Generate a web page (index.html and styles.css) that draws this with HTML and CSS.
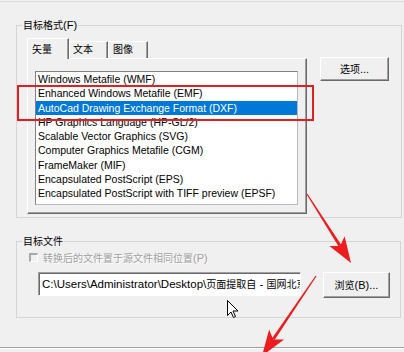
FILE: index.html
```html
<!DOCTYPE html>
<html lang="zh-CN">
<head>
<meta charset="UTF-8" />
<meta name="viewport" content="width=device-width, initial-scale=1" />
<title>导出</title>
<link rel="stylesheet" href="styles.css">
</head>
<body>

<div class="topline"></div>

<div class="group group-format">
  <div class="group-title"><span class="zh">目标格式</span>(F)</div>
  <div class="format-row">
    <div class="tabctl">
      <div class="tabs">
        <div class="tab active tab-1"><span class="zh">矢量</span></div>
        <div class="tab tab-2"><span class="zh">文本</span></div>
        <div class="tab tab-3"><span class="zh">图像</span></div>
      </div>
      <div class="tabpanel">
        <ul class="listbox">
          <li>Windows Metafile (WMF)</li>
          <li>Enhanced Windows Metafile (EMF)</li>
          <li class="selected">AutoCad Drawing Exchange Format (DXF)</li>
          <li>HP Graphics Language (HP-GL/2)</li>
          <li>Scalable Vector Graphics (SVG)</li>
          <li>Computer Graphics Metafile (CGM)</li>
          <li>FrameMaker (MIF)</li>
          <li>Encapsulated PostScript (EPS)</li>
          <li>Encapsulated PostScript with TIFF preview (EPSF)</li>
        </ul>
      </div>
    </div>
    <button class="btn btn-options"><span class="btn-label"><span class="zh">选项</span>...</span></button>
  </div>
</div>

<div class="group group-file">
  <div class="group-title"><span class="zh">目标文件</span></div>
  <div class="check disabled"><span class="box"></span><span class="check-label"><span class="zh">转换后的文件置于源文件相同位置</span>(P)</span></div>
  <div class="file-row">
    <div class="textbox">C:\Users\Administrator\Desktop\<span class="zh">页面提取自</span> - <span class="zh">国网北京</span></div>
    <button class="btn btn-browse"><span class="btn-label"><span class="zh">浏览</span>(B)...</span></button>
  </div>
</div>

<div class="bottomline"></div>

<!-- annotations drawn over the dialog -->
<div class="highlight"></div>
<svg class="annot" width="404" height="352" viewBox="0 0 404 352">
  <g fill="#ec1c1f">
    <polygon points="307.5,193.7 341.5,245.3 338.9,246.9 306.5,194.3" />
    <polygon points="351,263 344.6,236.3 340.2,246.1 329.4,245.9" />
    <polygon points="316.5,276.3 274.4,340.2 271.9,338.6 315.5,275.7" />
    <polygon points="262,356 284.1,339.4 273.2,339.4 269.1,329.4" />
  </g>
  <path class="cursor" d="M227.5 300.5 V315.5 L231 312 L233.5 317.5 L235.5 316.5 L233 311 L238 311 Z" />
</svg>

</body>
</html>
```

FILE: styles.css
```css
* {
  box-sizing: border-box;
}
html, body {
  margin: 0;
}
body {
  position: relative;
  width: 404px;
  height: 352px;
  overflow: hidden;
  background: #f0f0f0;
  font-family: "Liberation Sans", "Noto Sans CJK SC", sans-serif;
  font-size: 11px;
  color: #000;
}
.zh {
  font-size: 10px;
}
.topline {
  height: 1px;
  margin-top: 1px;
  background: #dcdcdc;
}

/* group boxes */
.group {
  margin-left: 16px;
  border: 1px solid #d5d5d5;
}
.group-format {
  margin-top: 23px;
  width: 386px;
  height: 193px;
}
.group-file {
  margin-top: 23px;
  width: 385px;
  height: 77px;
}
.group-title {
  width: fit-content;
  height: 14px;
  margin: -8px 0 0 5px;
  padding: 0 1px;
  line-height: 14px;
  background: #f0f0f0;
}

/* tab control */
.format-row {
  display: flex;
  align-items: flex-start;
  margin: 6px 0 0 10px;
}
.tabctl {
  width: 280px;
}
.tabs {
  position: relative;
  z-index: 1;
  display: flex;
  align-items: flex-start;
  height: 20px;
}
.tab {
  height: 17px;
  margin-top: 3px;
  line-height: 14px;
  border: 1px solid;
  border-color: #fff #696969 transparent #fff;
  border-bottom: 0;
  box-shadow: inset -1px 0 #a0a0a0;
  white-space: nowrap;
}
.tab.active {
  height: 21px;
  margin-top: 0;
  padding-top: 3px;
  background: #f0f0f0;
}
.tab-1 {
  width: 42px;
  padding-left: 4px;
}
.tab-2 {
  width: 39px;
  padding-left: 3px;
}
.tab-3 {
  width: 40px;
  padding-left: 4px;
}
.tabpanel {
  height: 156px;
  padding: 12px 7px 0 7px;
  border: 1px solid;
  border-color: #fff #696969 #696969 #fff;
  box-shadow: inset -1px -1px #a0a0a0;
}
.listbox {
  list-style: none;
  margin: 0;
  padding: 0;
  width: 263px;
  height: 134px;
  overflow: hidden;
  background: #fff;
  border: 1px solid;
  border-color: #828282 #b9b9b9 #b9b9b9 #828282;
  font-size: 10.5px;
}
.listbox li {
  height: 14.25px;
  line-height: 14.25px;
  padding-left: 2px;
  white-space: nowrap;
}
.listbox li.selected {
  background: #0078d7;
  color: #fff;
}

/* buttons */
.btn {
  padding: 0;
  font-family: inherit;
  font-size: 11px;
  color: #000;
  text-align: center;
  white-space: nowrap;
  background: #f0f0f0;
  border: 1px solid;
  border-color: #fff #696969 #696969 #fff;
  box-shadow: inset -1px -1px #a0a0a0;
}
.btn-label {
  display: inline-block;
  line-height: 14px;
}
.btn-options {
  width: 69px;
  height: 24px;
  margin: 19px 0 0 13px;
}
.btn-browse {
  width: 67px;
  height: 26px;
  margin-left: 22px;
}

/* target file */
.check {
  display: flex;
  align-items: center;
  height: 18px;
  margin-left: 12px;
  white-space: nowrap;
}
.check.disabled {
  color: #a0a0a0;
  text-shadow: 1px 1px #fff;
}
.box {
  width: 9px;
  height: 9px;
  margin-right: 5px;
  border-top: 2px solid #a8a8a8;
  border-left: 2px solid #a8a8a8;
  border-right: 1px solid #fff;
  border-bottom: 1px solid #fff;
}
.file-row {
  display: flex;
  align-items: flex-start;
  margin: 6px 0 0 21px;
}
.textbox {
  width: 263px;
  height: 24px;
  padding-left: 3px;
  font-size: 11.5px;
  line-height: 22px;
  white-space: nowrap;
  overflow: hidden;
  background: #fff;
  border: 1px solid;
  border-color: #a0a0a0 #fff #fff #a0a0a0;
  box-shadow: inset 1px 1px #696969;
}
.bottomline {
  height: 2px;
  margin-top: 29px;
  border-top: 1px solid #a0a0a0;
  border-bottom: 1px solid #fff;
}

/* annotations */
.highlight {
  position: absolute;
  left: 17px;
  top: 85px;
  width: 297px;
  height: 36px;
  border: 2px solid #e31e22;
}
.annot {
  position: absolute;
  left: 0;
  top: 0;
  pointer-events: none;
}
.cursor {
  fill: #fff;
  stroke: #000;
  stroke-width: 1;
  stroke-linejoin: miter;
}
```
